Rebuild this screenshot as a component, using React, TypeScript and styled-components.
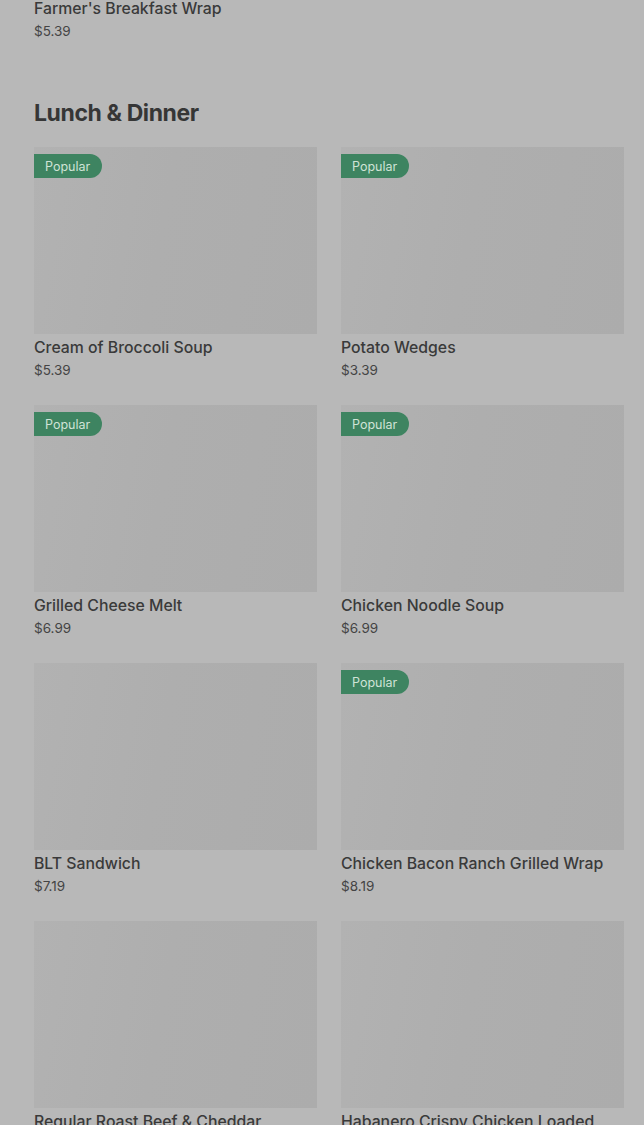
import React from "react";
import styled, { createGlobalStyle } from "styled-components";

const GlobalStyle = createGlobalStyle`
  html, body {
    margin: 0;
    padding: 0;
    background: #b8b8b8;
    overflow: hidden;
  }
  body {
    font-family: Inter, "Noto Sans", "Liberation Sans", sans-serif;
    color: #3a3a3a;
  }
`;

const Page = styled.main`
  padding: 0 20px 0 34px;
  height: 1125px;
  overflow: hidden;
`;

const Leftover = styled.section`
  margin-top: -1px;
  margin-bottom: 57px;
`;

const Heading = styled.h2`
  margin: 0 0 19px;
  font-size: 23px;
  line-height: 30px;
  font-weight: 700;
  letter-spacing: -0.4px;
  color: #363636;
`;

const Grid = styled.div`
  display: grid;
  grid-template-columns: 1fr 1fr;
  column-gap: 24px;
  row-gap: 25px;
`;

const Card = styled.article`
  display: flex;
  flex-direction: column;
`;

const Thumb = styled.div`
  position: relative;
  height: 187px;
  background: linear-gradient(100deg, #b2b2b2 0%, #aeaeae 45%, #acacac 100%);
`;

const Badge = styled.span`
  position: absolute;
  top: 7px;
  left: 0;
  height: 24px;
  padding: 0 12px 0 11px;
  display: flex;
  align-items: center;
  font-size: 12.5px;
  color: #cfe3d6;
  background: #3e8461;
  border-radius: 0 12px 12px 0;
`;

const Name = styled.div<{ $first?: boolean }>`
  margin-top: ${(p) => (p.$first ? "0" : "4px")};
  font-size: 15.8px;
  line-height: 20px;
  font-weight: 500;
  color: #3a3a3a;
  white-space: nowrap;
`;

const Price = styled.div`
  margin-top: 2px;
  font-size: 13.5px;
  line-height: 20px;
  color: #444;
`;

const items = [
  { name: "Cream of Broccoli Soup", price: "$5.39", popular: true },
  { name: "Potato Wedges", price: "$3.39", popular: true },
  { name: "Grilled Cheese Melt", price: "$6.99", popular: true },
  { name: "Chicken Noodle Soup", price: "$6.99", popular: true },
  { name: "BLT Sandwich", price: "$7.19", popular: false },
  { name: "Chicken Bacon Ranch Grilled Wrap", price: "$8.19", popular: true },
  { name: "Regular Roast Beef & Cheddar", price: "$6.49", popular: false },
  { name: "Habanero Crispy Chicken Loaded", price: "$8.49", popular: false },
];

const App = () => {
  return (
    <>
      <GlobalStyle />
      <Page>
        <Leftover>
          <Name $first>Farmer's Breakfast Wrap</Name>
          <Price>$5.39</Price>
        </Leftover>
        <Heading>Lunch &amp; Dinner</Heading>
        <Grid>
          {items.map((item, index) => (
            <Card key={index}>
              <Thumb>{item.popular && <Badge>Popular</Badge>}</Thumb>
              <Name>{item.name}</Name>
              <Price>{item.price}</Price>
            </Card>
          ))}
        </Grid>
      </Page>
    </>
  );
};

export default App;
